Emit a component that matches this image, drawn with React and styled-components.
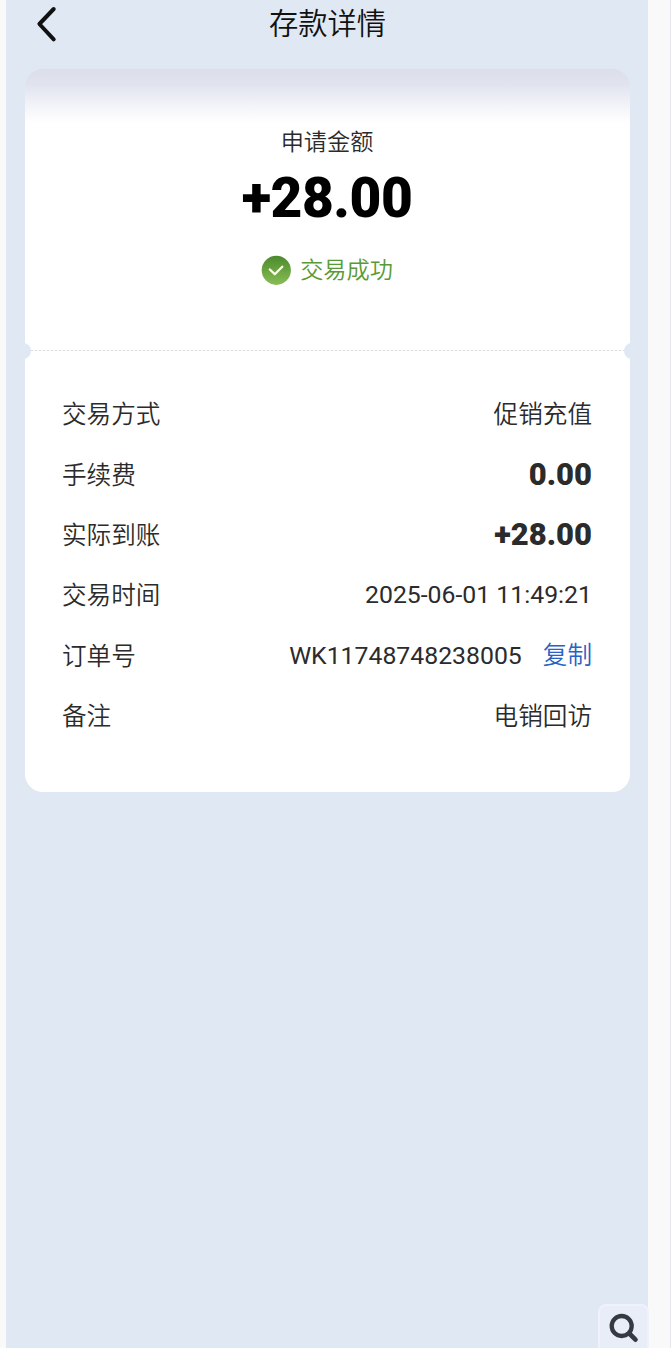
import React from "react";
import styled, { createGlobalStyle } from "styled-components";

const Global = createGlobalStyle`
  * { box-sizing: border-box; }
  body { margin: 0; background: #f9f9f9; font-family: Roboto, "Noto Sans CJK SC", sans-serif; color: #2b2b2b; }
`;
const Page = styled.div`
  position: relative;
  width: 671px;
  height: 1348px;
  overflow: hidden;
  padding: 0 22px 0 6px;
  border-right: 1px solid #e6e6ee;
`;
const Screen = styled.main`
  height: 100%;
  background: #e0e8f4;
  padding: 0 18px 0 19px;
`;
const Header = styled.header`
  height: 69px;
  display: grid;
  grid-template-columns: 44px 1fr 44px;
`;
const Back = styled.svg`
  width: 24px;
  height: 38px;
  margin: 5px 0 0 10px;
`;
const Title = styled.h1`
  margin: 0;
  padding-top: 2px;
  text-align: center;
  font-size: 29.3px;
  line-height: 44px;
  font-weight: 350;
  color: #111;
`;
const Summary = styled.section`
  height: 281px;
  border-radius: 18px 18px 0 0;
  background: linear-gradient(#dcdeea, #e1e3ef 16px, #f1f2f7 34px, #fff 54px);
  display: flex;
  flex-direction: column;
  align-items: center;
  padding: 56px 1px 0 0;
`;
const Label = styled.div`
  font-size: 23.2px;
  line-height: 34px;
  font-weight: 350;
`;
const Amount = styled.div`
  font-size: 55px;
  line-height: 64px;
  font-weight: 900;
  letter-spacing: -0.5px;
  color: #000;
  margin-top: 7px;
`;
const Status = styled.div`
  display: flex;
  align-items: center;
  gap: 9px;
  margin-top: 23px;
  height: 34px;
  color: #589a33;
  font-size: 23.2px;
  font-weight: 350;
`;
const StatusText = styled.span`
  line-height: 34px;
  padding-bottom: 1px;
`;
const Divider = styled.div`
  position: relative;
  height: 1px;
  margin: 0 6px;
  background: repeating-linear-gradient(90deg, #dedede 0 2px, #f4f4f4 2px 4px);
`;
const Notch = styled.i`
  position: absolute;
  top: -7px;
  ${(p) => p.$side}: -16px;
  width: 16px;
  height: 16px;
  border-radius: 50%;
  background: #e0e8f4;
`;
const Details = styled.section`
  height: 441px;
  background: #fff;
  border-radius: 0 0 18px 18px;
  padding: 34px 38px 0 37px;
`;
const Row = styled.div`
  height: 60.4px;
  display: flex;
  justify-content: space-between;
  align-items: center;
  font-size: 24.6px;
  font-weight: 350;
`;
const Term = styled.span`
  line-height: 36px;
`;
const Value = styled.span`
  line-height: 36px;
  padding-bottom: ${(p) => (p.$strong || p.$latin ? "2px" : 0)};
  font-size: ${(p) => (p.$strong ? "31px" : p.$latin ? "24.8px" : "24.6px")};
  font-weight: ${(p) => (p.$strong ? 900 : p.$latin ? 400 : 350)};
`;
const Copy = styled.span`
  margin-left: 21px;
  font-size: 24.6px;
  font-weight: 350;
  color: #2862c4;
`;
const Search = styled.div`
  position: absolute;
  left: 598px;
  top: 1304px;
  width: 51px;
  height: 50px;
  border: 2px solid #eff2fa;
  border-radius: 8px;
  background: #e8edf8;
`;

export default function App() {
  return (
    <>
      <Global />
      <Page>
        <Screen>
          <Header>
            <Back viewBox="0 0 24 38"><path d="M18.7 4L4.4 19L18.7 34.3" fill="none" stroke="#111" strokeWidth="4" strokeLinecap="round" strokeLinejoin="round" /></Back>
            <Title>存款详情</Title>
          </Header>
          <Summary>
            <Label>申请金额</Label>
            <Amount>+28.00</Amount>
            <Status>
              <svg width="30" height="30" viewBox="0 0 30 30">
                <defs><linearGradient id="g" x2="0" y2="1"><stop stopColor="#4b8a2d" /><stop offset="1" stopColor="#88bd55" /></linearGradient></defs>
                <circle cx="15.3" cy="15.3" r="14.6" fill="url(#g)" />
                <path d="M8.8 14.5l5 4.7L21.3 11.7" fill="none" stroke="#fffbe8" strokeWidth="2.3" strokeLinecap="round" strokeLinejoin="round" />
              </svg>
              <StatusText>交易成功</StatusText>
            </Status>
          </Summary>
          <Divider><Notch $side="left" /><Notch $side="right" /></Divider>
          <Details>
            <Row><Term>交易方式</Term><Value>促销充值</Value></Row>
            <Row><Term>手续费</Term><Value $strong>0.00</Value></Row>
            <Row><Term>实际到账</Term><Value $strong>+28.00</Value></Row>
            <Row><Term>交易时间</Term><Value $latin>2025-06-01 11:49:21</Value></Row>
            <Row><Term>订单号</Term><Value $latin>WK11748748238005<Copy>复制</Copy></Value></Row>
            <Row><Term>备注</Term><Value>电销回访</Value></Row>
          </Details>
        </Screen>
        <Search>
          <svg width="47" height="46" viewBox="2 2 47 46"><circle cx="23.7" cy="22" r="10" fill="none" stroke="#343a40" strokeWidth="4.3" /><path d="M31.3 29.5L37.5 35.7" stroke="#343a40" strokeWidth="4.6" strokeLinecap="round" /></svg>
        </Search>
      </Page>
    </>
  );
}
